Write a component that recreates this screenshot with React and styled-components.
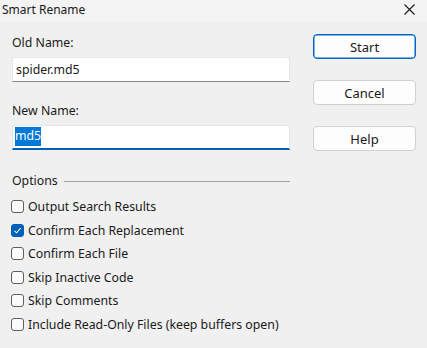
import React from 'react'
import styled, { createGlobalStyle } from 'styled-components'

const GlobalStyle = createGlobalStyle`
  html, body {
    margin: 0;
    padding: 0;
    background: #f0f0f0;
  }
  body {
    font-family: 'Noto Sans', 'Noto Sans CJK SC', sans-serif;
    color: #1a1a1a;
  }
`

const options = [
  { label: 'Output Search Results', checked: false },
  { label: 'Confirm Each Replacement', checked: true },
  { label: 'Confirm Each File', checked: false },
  { label: 'Skip Inactive Code', checked: false },
  { label: 'Skip Comments', checked: false },
  { label: 'Include Read-Only Files (keep buffers open)', checked: false },
]

const App = () => {
  return (
    <Window>
      <GlobalStyle />
      <TitleBar>
        <Title>Smart Rename</Title>
        <CloseButton aria-label='Close'>
          <svg width='11' height='11' viewBox='0 0 11 11'>
            <path d='M0.5 0.5 L10.5 10.5 M10.5 0.5 L0.5 10.5' stroke='#1a1a1a' strokeWidth='1.1' />
          </svg>
        </CloseButton>
      </TitleBar>
      <Body>
        <LeftColumn>
          <Field>
            <Label>Old Name:</Label>
            <Input>spider.md5</Input>
          </Field>
          <Field>
            <Label>New Name:</Label>
            <Input focused>
              <Selected>md5</Selected>
            </Input>
          </Field>
          <Group>
            <GroupHeader>
              <span>Options</span>
              <Rule />
            </GroupHeader>
            <CheckList>
              {options.map((o) => (
                <CheckRow key={o.label}>
                  <Box checked={o.checked}>
                    {o.checked && (
                      <svg width='9' height='9' viewBox='0 0 9 9'>
                        <path d='M1.5 4.8 L3.6 6.8 L7.6 2.2' fill='none' stroke='#fff' strokeWidth='1.1' />
                      </svg>
                    )}
                  </Box>
                  {o.label}
                </CheckRow>
              ))}
            </CheckList>
          </Group>
        </LeftColumn>
        <RightColumn>
          <Button primary>Start</Button>
          <Button>Cancel</Button>
          <Button>Help</Button>
        </RightColumn>
      </Body>
    </Window>
  )
}

export default App

const Window = styled.div`
  width: 427px;
  height: 348px;
  background: #f0f0f0;
  display: flex;
  flex-direction: column;
  overflow: hidden;
`
const TitleBar = styled.div`
  height: 22px;
  background: #f3f3f3;
  display: flex;
  align-items: center;
  justify-content: space-between;
  padding: 0 0 0 2px;
`
const Title = styled.div`
  font-size: 12px;
  margin-top: -3px;
`
const CloseButton = styled.div`
  width: 36px;
  height: 22px;
  display: flex;
  align-items: center;
  justify-content: center;
  margin-top: -4px;
`
const Body = styled.div`
  display: flex;
  padding: 12px 0 0 12px;
  gap: 23px;
`
const LeftColumn = styled.div`
  width: 278px;
  display: flex;
  flex-direction: column;
  font-size: 12.3px;
`
const Field = styled.div`
  display: flex;
  flex-direction: column;
  margin-bottom: 20px;
`
const Label = styled.div`
  line-height: 18px;
  margin-bottom: 5px;
`
const Input = styled.div`
  height: 25px;
  box-sizing: border-box;
  background: #fff;
  border: 1px solid #e6e6e6;
  border-bottom: ${(p) => (p.focused ? '2px solid #005fb8' : '1px solid #868686')};
  line-height: 18px;
  padding: ${(p) => (p.focused ? '1px 2px 0' : '3px 3px 0')};
  display: flex;
  align-items: flex-start;
`
const Selected = styled.span`
  background: #0078d7;
  color: #fff;
  padding: 0 0 1px;
  line-height: 18px;
`
const Group = styled.div`
  display: flex;
  flex-direction: column;
  margin-top: 2px;
`
const GroupHeader = styled.div`
  display: flex;
  align-items: center;
  gap: 6px;
  line-height: 18px;
`
const Rule = styled.div`
  flex: 1;
  height: 1px;
  background: #a0a0a0;
  margin-top: 1px;
`
const CheckList = styled.div`
  display: flex;
  flex-direction: column;
  margin-top: 5px;
`
const CheckRow = styled.label`
  display: flex;
  align-items: center;
  gap: 4px;
  height: 23.5px;
  margin-left: -1px;
  white-space: nowrap;
`
const Box = styled.span`
  flex: none;
  width: 13px;
  height: 13px;
  box-sizing: border-box;
  border-radius: 3px;
  border: 1px solid ${(p) => (p.checked ? '#005fb8' : '#5f5f5f')};
  background: ${(p) => (p.checked ? '#005fb8' : '#fbfbfb')};
  display: flex;
  align-items: center;
  justify-content: center;
`
const RightColumn = styled.div`
  display: flex;
  flex-direction: column;
  gap: 21px;
`
const Button = styled.div`
  width: 103px;
  height: 25px;
  box-sizing: border-box;
  background: #fdfdfd;
  border: 1px solid ${(p) => (p.primary ? '#0067c0' : '#d0d0d0')};
  box-shadow: ${(p) => (p.primary ? 'inset 0 0 0 0.5px #0067c0' : 'none')};
  border-radius: 4px;
  font-size: 13px;
  display: flex;
  align-items: center;
  justify-content: center;
  color: #1a1a1a;
`
